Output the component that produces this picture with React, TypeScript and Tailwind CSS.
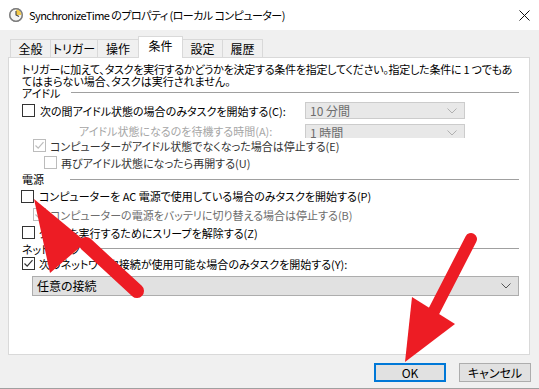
import React from "react";

const F = "font-['Noto_Sans_CJK_JP','Noto_Sans',sans-serif] [font-feature-settings:'palt']";

function Check({ checked, disabled }: { checked?: boolean; disabled?: boolean }) {
  const c = disabled ? "#bcbcbc" : "#333333";
  return (
    <div
      className={`w-[13px] h-[13px] shrink-0 border bg-white flex items-center justify-center ${disabled ? "border-[#bcbcbc]" : "border-[#333333]"}`}
    >
      {checked && (
        <svg width="11" height="11" viewBox="0 0 11 11">
          <path d="M1.5 5.5 L4.2 8.2 L9.5 2.2" fill="none" stroke={c} strokeWidth="1.2" />
        </svg>
      )}
    </div>
  );
}

function Chevron({ color }: { color: string }) {
  return (
    <svg width="10" height="6" viewBox="0 0 10 6">
      <path d="M0.5 0.5 L5 5 L9.5 0.5" fill="none" stroke={color} strokeWidth="1" />
    </svg>
  );
}

function Header({ label, h, lineStart }: { label: string; h: string; lineStart: string }) {
  return (
    <div className={`${h} flex items-center pl-[13px] pr-[10px]`}>
      <span className={`text-[11px] leading-[12px] text-black whitespace-nowrap ${lineStart}`}>{label}</span>
      <div className="flex-1 h-px bg-[#a0a0a0]" />
    </div>
  );
}

export default function App() {
  const tabs = ["全般", "トリガー", "操作", "条件", "設定", "履歴"];
  const widths = ["w-[41px]", "w-[48px]", "w-[42px]", "w-[45px]", "w-[41px]", "w-[41px]"];
  return (
    <div className={`relative w-[539px] h-[389px] bg-[#f0f0f0] overflow-hidden whitespace-nowrap ${F}`}>
      {/* title bar */}
      <div className="h-[30px] bg-white flex items-center">
        <svg className="ml-[9px]" width="14" height="14" viewBox="0 0 14 14">
          <circle cx="7" cy="7" r="6.3" fill="#f4f4f4" stroke="#8a8a8a" strokeWidth="1.2" />
          <path d="M7 7 L7 1.5 A5.5 5.5 0 0 1 12.5 7 Z" fill="#f2c94c" />
          <circle cx="7" cy="7" r="6.3" fill="none" stroke="#7d7d7d" strokeWidth="1.2" />
          <path d="M7 3 L7 7 L10 8.5" fill="none" stroke="#444" strokeWidth="1.1" />
        </svg>
        <span className="ml-[6px] text-[11px] leading-[14px] text-black tracking-[-0.55px]">
          SynchronizeTime のプロパティ (ローカル コンピューター)
        </span>
        <div className="flex-1" />
        <svg className="mr-[9px]" width="11" height="11" viewBox="0 0 11 11">
          <path d="M0.5 0.5 L10.5 10.5 M10.5 0.5 L0.5 10.5" stroke="#111" strokeWidth="1" />
        </svg>
      </div>

      {/* tabs */}
      <div className="h-[27px] pl-[10px] flex items-end relative z-10">
        {tabs.map((t, i) =>
          i === 3 ? (
            <div
              key={t}
              className={`${widths[i]} h-[22px] -mb-px -ml-px bg-white border border-b-0 border-[#d9d9d9] flex items-start justify-center pt-[2px] text-[12px] leading-[14px] text-black`}
            >
              {t}
            </div>
          ) : (
            <div
              key={t}
              className={`${widths[i]} h-[18px] bg-[#f0f0f0] border border-b-0 border-[#d9d9d9] flex items-center justify-center text-[12px] leading-[14px] text-black ${i === 0 ? "" : "-ml-px"}`}
            >
              {t}
            </div>
          )
        )}
      </div>

      {/* panel */}
      <div className="ml-[8px] w-[522px] h-[298px] bg-white border border-[#d9d9d9] text-[11px] leading-[12px] text-black">
        <div className="pt-[5px] pl-[13px] pr-[10px] h-[29px]">
          <div className="tracking-[-0.25px]">
            トリガーに加えて、タスクを実行するかどうかを決定する条件を指定してください。指定した条件に 1 つでもあ
          </div>
          <div>てはまらない場合、タスクは実行されません。</div>
        </div>
        <Header label="アイドル" h="h-[11px]" lineStart="mr-[11px]" />
        {/* row C */}
        <div className="h-[25px] flex items-center pl-[13px]">
          <Check />
          <span className="ml-[5px] w-[265px]">次の間アイドル状態の場合のみタスクを開始する(C):</span>
          <div className="w-[160px] h-[17px] bg-[#e8e8e8] border border-[#cccccc] flex items-center pl-[4px] pr-[7px] text-[#6d6d6d]">
            <span className="flex-1 text-[12px]">10 分間</span>
            <Chevron color="#b0b0b0" />
          </div>
        </div>
        {/* row A */}
        <div className="h-[15px] flex items-start pl-[70px] overflow-hidden">
          <span className="w-[226px] text-[#a6a6a6] self-center">アイドル状態になるのを待機する時間(A):</span>
          <div className="mt-[1px] w-[160px] h-[17px] shrink-0 bg-[#e8e8e8] border border-[#cccccc] flex items-center pl-[4px] pr-[7px] text-[#6d6d6d]">
            <span className="flex-1 text-[12px] leading-[14px]">1 時間</span>
            <Chevron color="#b0b0b0" />
          </div>
        </div>
        {/* row E */}
        <div className="h-[15px] flex items-center pl-[24px]">
          <Check checked disabled />
          <span className="ml-[4px] text-[#333]">コンピューターがアイドル状態でなくなった場合は停止する(E)</span>
        </div>
        {/* row U */}
        <div className="h-[19px] flex items-center pl-[35px]">
          <Check disabled />
          <span className="ml-[4px] text-[#333]">再びアイドル状態になったら再開する(U)</span>
        </div>
        <Header label="電源" h="h-[14px]" lineStart="mr-[26px]" />
        {/* row P */}
        <div className="h-[20px] flex items-center pl-[12px]">
          <Check />
          <span className="ml-[5px]">コンピューターを AC 電源で使用している場合のみタスクを開始する(P)</span>
        </div>
        {/* row B */}
        <div className="h-[17px] flex items-center pl-[24px]">
          <Check checked disabled />
          <span className="ml-[4px] text-[#6d6d6d]">コンピューターの電源をバッテリに切り替える場合は停止する(B)</span>
        </div>
        {/* row Z */}
        <div className="h-[19px] flex items-center pl-[13px]">
          <Check />
          <span className="ml-[4px]">タスクを実行するためにスリープを解除する(Z)</span>
        </div>
        <Header label="ネットワーク" h="h-[13px]" lineStart="mr-[10px]" />
        {/* row Y */}
        <div className="h-[17px] flex items-center pl-[13px]">
          <Check checked />
          <span className="ml-[4px]">次のネットワーク接続が使用可能な場合のみタスクを開始する(Y):</span>
        </div>
        <div className="mt-[4px] ml-[23px] w-[487px] h-[20px] bg-[#e1e1e1] border border-[#adadad] flex items-center pl-[4px] pr-[7px]">
          <span className="flex-1 text-[12px]">任意の接続</span>
          <Chevron color="#555555" />
        </div>
      </div>

      {/* buttons */}
      <div className="mt-[8px] flex justify-end pr-[8px] gap-[13px] text-[12px] leading-[14px] text-black">
        <div className="w-[72px] h-[19px] bg-[#e1e1e1] border-2 border-[#0078d7] flex items-center justify-center">OK</div>
        <div className="w-[72px] h-[19px] bg-[#e1e1e1] border border-[#adadad] flex items-center justify-center">キャンセル</div>
      </div>
      <div className="absolute left-0 right-0 bottom-0 h-px bg-[#a0a0a0]" />

      {/* annotation arrows */}
      <svg className="absolute inset-0 pointer-events-none" width="539" height="389" viewBox="0 0 539 389">
        <line x1="86" y1="244" x2="137" y2="291" stroke="#ed1c24" strokeWidth="14" strokeLinecap="round" />
        <polygon points="34,199 86,242 50,273" fill="#ed1c24" />
        <line x1="434" y1="311" x2="471" y2="239" stroke="#ed1c24" strokeWidth="12" strokeLinecap="round" />
        <polygon points="405,362 412,297 455,324" fill="#ed1c24" />
      </svg>
    </div>
  );
}
